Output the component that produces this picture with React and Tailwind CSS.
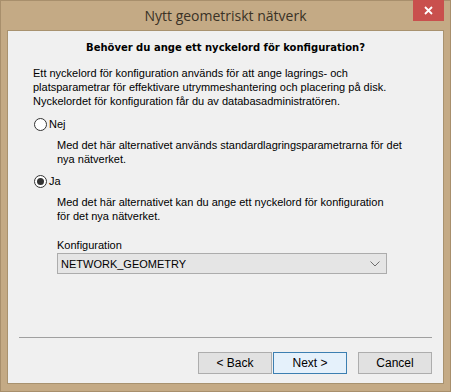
export default function App() {
  const body = "font-['Liberation_Sans',Arial,sans-serif] text-[11px] leading-[14px] text-[#000000]";
  return (
    <div className="w-[451px] h-[392px] bg-[#c4aa85] border border-[#a88f6c] flex flex-col">
      <div className="relative h-[29px] flex items-center justify-center">
        <span className="font-['Open_Sans',sans-serif] text-[14px] text-[#3a3226] mt-[-1px]">Nytt geometriskt nätverk</span>
        <div className="absolute top-[-1px] right-[6px] w-[31px] h-[21px] bg-[#c9504d] flex items-center justify-center">
          <svg width="9" height="9" viewBox="0 0 9 9">
            <path d="M1 1 L8 8 M8 1 L1 8" stroke="#ffffff" strokeWidth="1.8" />
          </svg>
        </div>
      </div>
      <div className={`mx-[6px] h-[354px] bg-[#f0f0f0] border border-[#a8926f] flex flex-col ${body}`}>
        <div className="pt-[10px] text-center font-bold font-['DejaVu_Sans',Verdana,sans-serif] text-[10px]">
          Behöver du ange ett nyckelord för konfiguration?
        </div>
        <div className="mt-[11px] pl-[25px]">
          <p>Ett nyckelord för konfiguration används för att ange lagrings- och</p>
          <p>platsparametrar för effektivare utrymmeshantering och placering på disk.</p>
          <p>Nyckelordet för konfiguration får du av databasadministratören.</p>
        </div>
        <div className="mt-[9px] pl-[26px] flex items-center gap-[2px] h-[14px]">
          <span className="w-[13px] h-[13px] rounded-full border border-[#333333] bg-white"></span>
          <span>Nej</span>
        </div>
        <div className="mt-[7px] pl-[49px]">
          <p>Med det här alternativet används standardlagringsparametrarna för det</p>
          <p>nya nätverket.</p>
        </div>
        <div className="mt-[8px] pl-[26px] flex items-center gap-[2px] h-[14px]">
          <span className="w-[13px] h-[13px] rounded-full border border-[#333333] bg-white flex items-center justify-center">
            <span className="w-[7px] h-[7px] rounded-full bg-[#333333]"></span>
          </span>
          <span>Ja</span>
        </div>
        <div className="mt-[7px] pl-[49px]">
          <p>Med det här alternativet kan du ange ett nyckelord för konfiguration</p>
          <p>för det nya nätverket.</p>
        </div>
        <div className="mt-[15px] pl-[49px]">Konfiguration</div>
        <div className="mt-[1px] ml-[49px] w-[330px] h-[21px] bg-[#e5e5e5] border border-[#acacac] flex items-center justify-between pl-[3px] pr-[6px]">
          <span>NETWORK_GEOMETRY</span>
          <svg width="10" height="6" viewBox="0 0 10 6">
            <path d="M0.5 0.5 L5 5 L9.5 0.5" stroke="#6d6d6d" strokeWidth="1" fill="none" />
          </svg>
        </div>
        <div className="mt-auto mx-[11px] border-t border-[#a0a0a0]"></div>
        <div className="mt-[14px] mb-[9px] pr-[11px] flex justify-end">
          <button className="w-[74px] h-[22px] bg-[#e1e1e1] border border-[#adadad] text-[12px]">&lt; Back</button>
          <button className="ml-[1px] w-[74px] h-[22px] bg-[#e5f1fb] border border-[#3c7fb1] text-[12px]">Next &gt;</button>
          <button className="ml-[11px] w-[74px] h-[22px] bg-[#e1e1e1] border border-[#adadad] text-[12px]">Cancel</button>
        </div>
      </div>
    </div>
  );
}
